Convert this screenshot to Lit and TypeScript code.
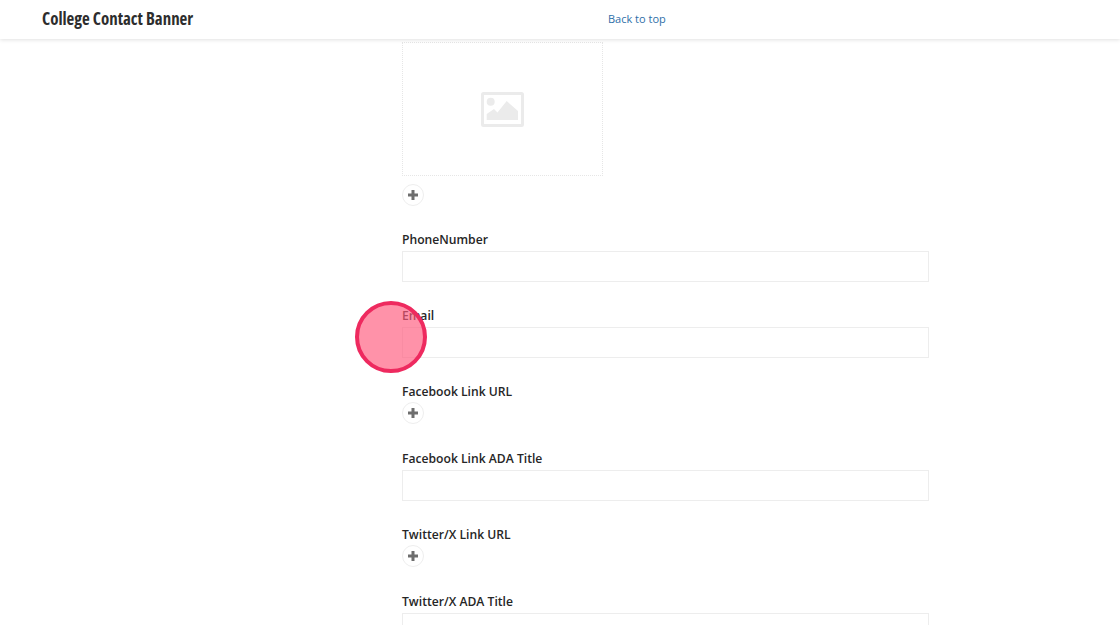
import { LitElement, html, css } from "lit";
import { customElement } from "lit/decorators.js";

const plus = html`<button class="add" aria-label="Add"><svg width="10" height="10" viewBox="0 0 10 10"><path d="M3.500 0h3v3.500H10v3H6.500V10h-3V6.500H0v-3h3.500z" fill="#6e6e6e"/></svg></button>`;

@customElement("app-root")
export class AppRoot extends LitElement {
  static styles = css`
    :host { display: block; height: 625px; overflow: hidden; position: relative; background: #fff; font-family: "Open Sans", "Liberation Sans", sans-serif; color: #2b2b2b; }
    header { height: 39px; box-sizing: border-box; padding-bottom: 2px; display: flex; align-items: center; padding-left: 42px; background: #fff; box-shadow: 0 1px 4px rgba(0,0,0,.12); position: relative; z-index: 1; }
    .title { width: 566px; font-size: 16.900px; line-height: 37px; font-weight: 700; font-stretch: 75%; color: #2d2d2d; white-space: nowrap; }
    .top { font-size: 11px; color: #2f6fa8; text-decoration: none; }
    main { width: 527px; margin-left: 402px; padding-top: 3px; display: flex; flex-direction: column; }
    .image { width: 201px; height: 134px; box-sizing: border-box; border: 1px dotted #e6e6e6; display: flex; align-items: center; justify-content: center; }
    .add { width: 22px; height: 22px; padding: 0; border: 1px solid #eeeeee; border-radius: 50%; background: #fff; display: flex; align-items: center; justify-content: center; }
    .imgadd { margin-top: 8px; margin-bottom: 24px; }
    .field { display: flex; flex-direction: column; margin-bottom: 24px; }
    .field.link { margin-bottom: 25px; }
    .field.link label { margin-bottom: 2px; }
    label { font-size: 12.150px; line-height: 20px; font-weight: 600; color: #262626; height: 18px; margin-bottom: 3px; }
    .input { height: 31px; box-sizing: border-box; border: 1px solid #ededed; background: #fff; }
    .marker { position: absolute; left: 355px; top: 301px; width: 72px; height: 72px; box-sizing: border-box; border: 4px solid #ee2a5f; border-radius: 50%; background: rgba(255,90,125,.66); z-index: 2; }
  `;

  private text(name: string) {
    return html`<div class="field"><label>${name}</label><div class="input"></div></div>`;
  }
  private link(name: string) {
    return html`<div class="field link"><label>${name}</label>${plus}</div>`;
  }

  render() {
    return html`
      <header><div class="title">College Contact Banner</div><a class="top" href="#">Back to top</a></header>
      <main>
        <div class="image">
          <svg width="43" height="35" viewBox="0 0 43 35" fill="#ebebeb">
            <path fill-rule="evenodd" d="M2.500 0h38A2.500 2.500 0 0 1 43 2.500v30a2.500 2.500 0 0 1-2.500 2.500h-38A2.500 2.500 0 0 1 0 32.500v-30A2.500 2.500 0 0 1 2.500 0zM3 3v29h37V3z"/>
            <circle cx="9.700" cy="9.700" r="4"/>
            <path d="M5.700 28v-6l7.300-5 3.500 3.500 9.200-11.500L37 19v9z"/>
          </svg>
        </div>
        <div class="imgadd">${plus}</div>
        ${this.text("PhoneNumber")}
        ${this.text("Email")}
        ${this.link("Facebook Link URL")}
        ${this.text("Facebook Link ADA Title")}
        ${this.link("Twitter/X Link URL")}
        ${this.text("Twitter/X ADA Title")}
      </main>
      <div class="marker"></div>
    `;
  }
}
